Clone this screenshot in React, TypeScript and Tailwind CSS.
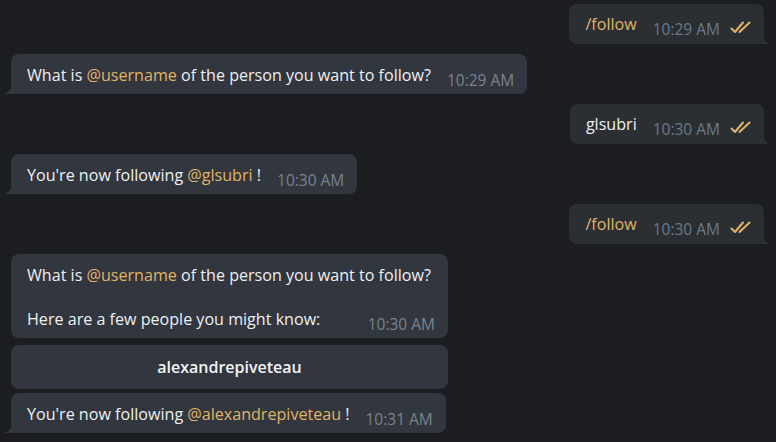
import React from 'react'

type Part = { text: string; mention?: boolean }

function Mention({ children }: { children: React.ReactNode }) {
  return <span className="text-[#e0b466]">{children}</span>
}

function Checks() {
  return (
    <svg width="22" height="14" viewBox="0 0 22 14" className="ml-[10px] mb-[1px]">
      <path d="M1.5 8.5 L5 12 L13 2.5" fill="none" stroke="#e0b466" strokeWidth="2" strokeLinecap="round" strokeLinejoin="round" />
      <path d="M9.5 12 L19.5 2.5" fill="none" stroke="#e0b466" strokeWidth="2" strokeLinecap="round" />
    </svg>
  )
}

function TailIn() {
  return (
    <svg width="8" height="11" viewBox="0 0 8 11" className="absolute -left-[7px] bottom-0">
      <path d="M8 0 C8 6 5 9.5 0 11 L8 11 Z" fill="#32363e" />
    </svg>
  )
}

function TailOut() {
  return (
    <svg width="8" height="11" viewBox="0 0 8 11" className="absolute -right-[7px] bottom-0">
      <path d="M0 0 C0 6 3 9.5 8 11 L0 11 Z" fill="#2b2f34" />
    </svg>
  )
}

function Outgoing({ text, time, accent }: { text: string; time: string; accent?: boolean }) {
  return (
    <div className="flex justify-end pr-[12px]">
      <div className="relative flex items-end rounded-[8px] rounded-br-none bg-[#2b2f34] pl-4 pr-3 pt-[9px] pb-[9px]">
        <span className={accent ? 'text-[16.1px] leading-[22px] text-[#e0b466]' : 'text-[16.1px] leading-[22px] text-[#eef0f2]'}>{text}</span>
        <span className="ml-4 text-[#6c7986] leading-[20px] translate-y-[4px]">{time}</span>
        <Checks />
        <TailOut />
      </div>
    </div>
  )
}

function Line({ line }: { line: Part[] }) {
  return (
    <>
      {line.map((p, j) => (p.mention ? <Mention key={j}>{p.text}</Mention> : <span key={j}>{p.text}</span>))}
    </>
  )
}

function Incoming({ parts, time, tail = true, width }: { parts: Part[][]; time: string; tail?: boolean; width?: string }) {
  const last = parts[parts.length - 1]
  return (
    <div className="flex pl-[11px]">
      <div
        className={
          (tail ? 'rounded-bl-none ' : '') +
          'relative flex flex-col rounded-[8px] bg-[#32363e] pl-4 pr-[13px] pt-[10px] pb-[8px] text-[16.1px] text-[#eef0f2] leading-[22px] whitespace-nowrap ' +
          (width ?? '')
        }
      >
        {parts.slice(0, -1).map((line, i) => (
          <div key={i} className="min-h-[22px]">
            <Line line={line} />
          </div>
        ))}
        <div className="flex items-end">
          <div className="flex-1">
            <Line line={last} />
          </div>
          <span className="ml-4 text-[15.5px] text-[#7b838d] leading-[20px] translate-y-[4px]">{time}</span>
        </div>
        {tail && <TailIn />}
      </div>
    </div>
  )
}

export default function App() {
  return (
    <div
      className="w-[776px] h-[442px] overflow-hidden bg-[#1c1d21] pt-[4px] text-[15.5px] flex flex-col"
      style={{ fontFamily: '"Open Sans", sans-serif' }}
    >
      <Outgoing text="/follow" time="10:29 AM" accent />
      <div className="mt-[10px]">
        <Incoming
          parts={[[{ text: 'What is ' }, { text: '@username', mention: true }, { text: ' of the person you want to follow?' }]]}
          time="10:29 AM"
        />
      </div>
      <div className="mt-[10px]">
        <Outgoing text="glsubri" time="10:30 AM" />
      </div>
      <div className="mt-[10px]">
        <Incoming
          parts={[[{ text: "You're now following " }, { text: '@glsubri', mention: true }, { text: ' !' }]]}
          time="10:30 AM"
        />
      </div>
      <div className="mt-[10px]">
        <Outgoing text="/follow" time="10:30 AM" accent />
      </div>
      <div className="mt-[10px]">
        <Incoming
          tail={false}
          width="w-[437px]"
          parts={[
            [{ text: 'What is ' }, { text: '@username', mention: true }, { text: ' of the person you want to follow?' }],
            [],
            [{ text: 'Here are a few people you might know:' }],
          ]}
          time="10:30 AM"
        />
      </div>
      <div className="mt-[7px] pl-[11px]">
        <button className="w-[437px] h-[44px] rounded-[8px] bg-[#32363e] text-[16px] text-[#f2f3f5] font-semibold">
          alexandrepiveteau
        </button>
      </div>
      <div className="mt-[4px]">
        <Incoming
          parts={[[{ text: "You're now following " }, { text: '@alexandrepiveteau', mention: true }, { text: ' !' }]]}
          time="10:31 AM"
        />
      </div>
    </div>
  )
}
